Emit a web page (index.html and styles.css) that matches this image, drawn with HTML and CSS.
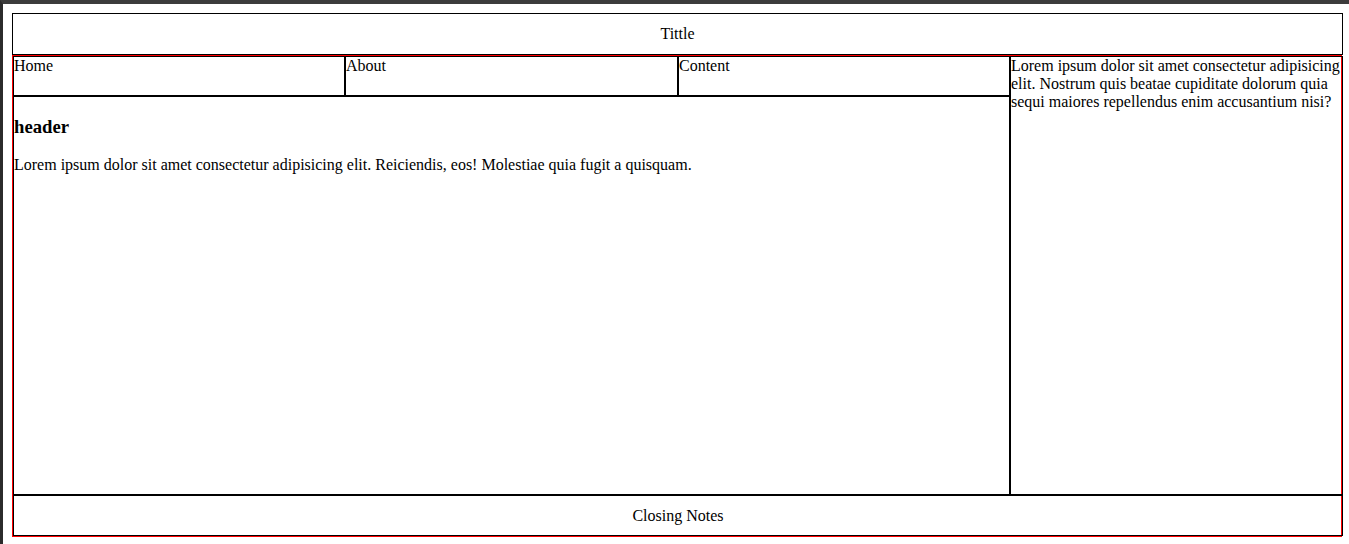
FILE: index.html
```html
<!DOCTYPE html>
<html lang="en">
<head>
<meta charset="utf-8">
<title>Layout</title>
<link rel="stylesheet" href="styles.css">
</head>
<body>
<div class="window">
  <div class="title">Tittle</div>
  <div class="page">
    <div class="nav-cell">Home</div>
    <div class="nav-cell">About</div>
    <div class="nav-cell">Content</div>
    <aside class="sidebar">Lorem ipsum dolor sit amet consectetur adipisicing elit. Nostrum quis beatae cupiditate dolorum quia sequi maiores repellendus enim accusantium nisi?</aside>
    <main class="main">
      <h3 class="main-heading">header</h3>
      <p class="main-text">Lorem ipsum dolor sit amet consectetur adipisicing elit. Reiciendis, eos! Molestiae quia fugit a quisquam.</p>
    </main>
    <footer class="footer">Closing Notes</footer>
  </div>
</div>
</body>
</html>
```
FILE: styles.css
```css
html, body {
  margin: 0;
  padding: 0;
  background: #ffffff;
}
body {
  font-family: "Liberation Serif", "Times New Roman", serif;
  font-size: 16px;
  color: #000;
}
.window {
  height: 540px;
  border-top: 4px solid #3c3c3c;
  border-left: 3px solid #2b2b2b;
  padding: 9px 0 0 9px;
  box-sizing: border-box;
  height: 544px;
  overflow: hidden;
}
.title {
  width: 1329px;
  height: 40px;
  border: 1px solid #000;
  display: flex;
  align-items: center;
  justify-content: center;
}
.page {
  width: 1328px;
  border: 1px solid #ff0000;
  display: grid;
  grid-template-columns: 332px 333px 332px 333px;
  grid-template-rows: 40px 399px 41px;
}
.nav-cell {
  border: 1px solid #000;
  line-height: 18px;
}
.sidebar {
  grid-column: 4;
  grid-row: 1 / 3;
  border: 1px solid #000;
  line-height: 18px;
}
.main {
  grid-column: 1 / 4;
  grid-row: 2;
  border: 1px solid #000;
}
.main-heading {
  font-size: 18.72px;
  font-weight: bold;
  margin: 18.72px 0;
}
.main-text {
  margin: 16px 0;
}
.footer {
  grid-column: 1 / 5;
  grid-row: 3;
  border: 1px solid #000;
  display: flex;
  align-items: center;
  justify-content: center;
}
```
